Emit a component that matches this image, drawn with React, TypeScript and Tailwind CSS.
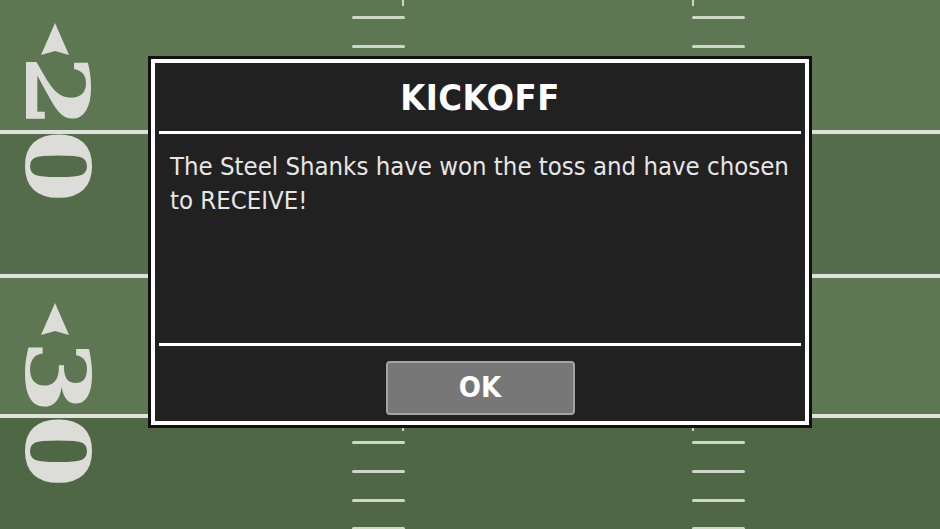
import React from 'react';

const HASH_TOP = [16, 45];
const HASH_BOTTOM = [441, 470, 499, 527];

function Arrow({ top }: { top: number }) {
  return (
    <svg
      className="absolute left-[41px]"
      style={{ top }}
      width="28"
      height="32"
      viewBox="0 0 28 32"
    >
      <polygon points="14,0 28,32 14,28 0,32" fill="#dcdcd8" />
    </svg>
  );
}

// yard numbers run down the sideline, glyph tops facing the middle of the field
function YardNumber({ value, top }: { value: string; top: number }) {
  return (
    <div
      className="absolute left-[13px] origin-top scale-y-[1.33] font-['DejaVu_Serif',serif] text-[88px] font-bold leading-none tracking-[1px] text-[#dcdcd8] [writing-mode:vertical-rl]"
      style={{ top }}
    >
      {value}
    </div>
  );
}

function HashMark({ left, top }: { left: number; top: number }) {
  return (
    <div
      className="absolute h-[3px] w-[53px] rounded-sm bg-[#ced6c8]"
      style={{ left, top }}
    />
  );
}

export default function App() {
  return (
    <div className="relative h-[529px] w-[940px] overflow-hidden font-['DejaVu_Sans_Condensed','DejaVu_Sans',sans-serif] [font-stretch:condensed]">
      {/* field stripes + yard lines */}
      <div className="flex h-full flex-col">
        <div className="h-[130px] bg-[#5d7752]" />
        <div className="h-[4px] bg-[#dfe2dc]" />
        <div className="h-[140px] bg-[#546c4a]" />
        <div className="h-[4px] bg-[#dfe2dc]" />
        <div className="h-[136px] bg-[#5d7752]" />
        <div className="h-[4px] bg-[#dfe2dc]" />
        <div className="flex-1 bg-[#506746]" />
      </div>

      {/* field markings */}
      <Arrow top={23} />
      <YardNumber value="20" top={55} />
      <Arrow top={303} />
      <YardNumber value="30" top={340} />

      {HASH_TOP.concat(HASH_BOTTOM).map((y) => (
        <React.Fragment key={y}>
          <HashMark left={352} top={y} />
          <HashMark left={692} top={y} />
        </React.Fragment>
      ))}
      <div className="absolute left-[402px] top-0 h-[6px] w-[2px] bg-[#ced6c8]" />
      <div className="absolute left-[692px] top-0 h-[6px] w-[2px] bg-[#ced6c8]" />
      <div className="absolute left-[402px] top-[428px] h-[3px] w-[2px] bg-[#ced6c8]" />
      <div className="absolute left-[692px] top-[428px] h-[3px] w-[2px] bg-[#ced6c8]" />

      {/* kickoff dialog */}
      <div className="absolute left-[148px] top-[56px] h-[372px] w-[664px] border-[3px] border-[#111]">
        <div className="flex h-full flex-col border-4 border-white bg-[#212121]">
          <div className="flex h-[68px] items-center justify-center pt-[2px]">
            <h1 className="text-[36px] font-bold leading-none tracking-[0.5px] text-white">KICKOFF</h1>
          </div>
          <div className="mx-1 h-[3px] bg-white" />
          <div className="h-[209px] px-[15px] pt-[15px]">
            <p className="text-[25.5px] leading-[34px] text-[#e6e6e6]">
              The Steel Shanks have won the toss and have chosen to RECEIVE!
            </p>
          </div>
          <div className="mx-1 h-[3px] bg-white" />
          <div className="flex flex-1 justify-center pt-[15px]">
            <button className="h-[54px] w-[189px] rounded-[4px] border-2 border-[#a3a3a3] bg-[#777777] text-[29px] font-bold text-white">
              OK
            </button>
          </div>
        </div>
      </div>
    </div>
  );
}
